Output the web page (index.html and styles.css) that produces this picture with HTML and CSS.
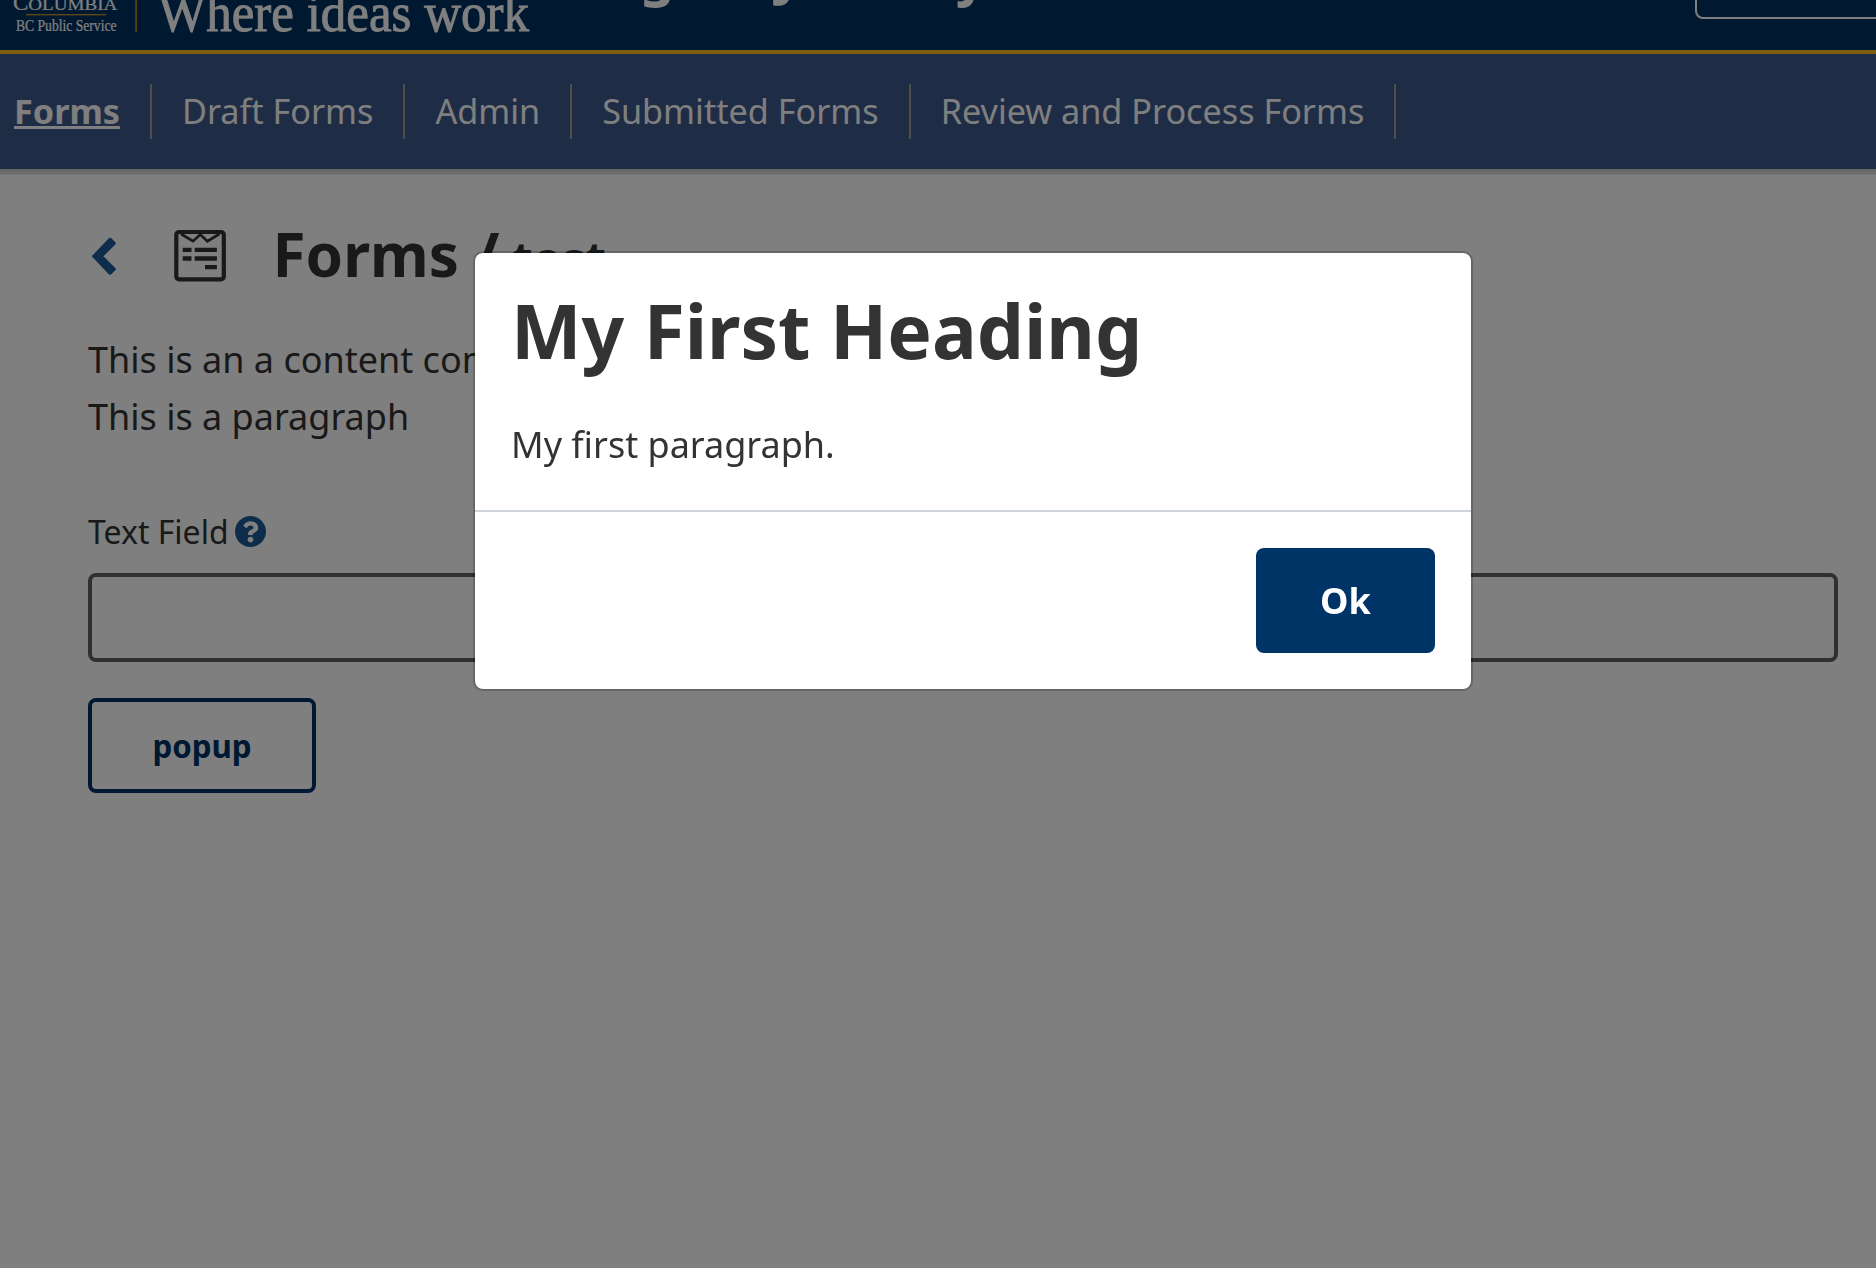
FILE: index.html
```html
<!DOCTYPE html>
<html lang="en">
<head>
<meta charset="utf-8">
<title>Digital Journeys</title>
<link rel="stylesheet" href="styles.css">
</head>
<body>
<header class="site-header">
  <svg class="logo" width="560" height="50" viewBox="0 0 560 50" role="img">
    <text class="logo-text" y="9.5" x="13"><tspan font-size="23">C</tspan><tspan font-size="17.5" textLength="89" lengthAdjust="spacingAndGlyphs">OLUMBIA</tspan></text>
    <rect class="logo-rule" x="26" y="14" width="80" height="1.4"/>
    <text class="logo-text" x="16" y="30.5" font-size="15.8" textLength="100.5" lengthAdjust="spacingAndGlyphs">BC Public Service</text>
    <rect class="logo-rule" x="135.3" y="0" width="1.6" height="32"/>
    <text class="logo-text tagline" x="158" y="31" font-size="54" textLength="371" lengthAdjust="spacingAndGlyphs">Where ideas work</text>
  </svg>
  <div class="site-title">Digital Journeys</div>
  <button class="logout"></button>
</header>
<nav class="nav">
  <a class="nav-item active"><span>Forms</span></a>
  <a class="nav-item"><span>Draft Forms</span></a>
  <a class="nav-item"><span>Admin</span></a>
  <a class="nav-item"><span>Submitted Forms</span></a>
  <a class="nav-item"><span>Review and Process Forms</span></a>
</nav>
<div class="nav-shadow"></div>
<main class="content">
  <div class="page-head">
    <svg class="chevron" width="26" height="42" viewBox="0 0 26 42"><path d="M3.7 21.3 20.8 3.3Q22 2 23.3 3.3L27.3 7.2Q28.4 8.4 27.3 9.5L15.4 21.3 27.3 33Q28.4 34.2 27.3 35.3L23.3 39.2Q22 40.4 20.8 39.2Z"/></svg>
    <svg class="form-icon" width="52" height="52" viewBox="0 0 52 52">
      <rect x="2.3" y="2" width="47.5" height="47.4" rx="2.8" fill="none" stroke-width="4.2"/>
      <path d="M7 4 19 11.2 26.3 4.6 33.4 11.2 45.4 4" fill="none" stroke-width="2.7"/>
      <path d="M8.7 19.8h8.8M20.7 19.8h22.2M8.7 28.5h8.8M20.7 28.5h22.2M31 37.2h11.9" stroke-width="4.3"/>
    </svg>
    <h1 class="page-title">Forms /<span class="form-name"> test</span></h1>
  </div>
  <div class="copy">
    <p>This is an a content component</p>
    <p>This is a paragraph</p>
  </div>
  <label class="label" for="text-field">Text Field
    <svg class="help" width="31" height="31" viewBox="8 8 496 496"><path d="M504 256c0 136.997-111.043 248-248 248S8 392.997 8 256C8 119.083 119.043 8 256 8s248 111.083 248 248zM262.655 90c-54.497 0-89.255 22.957-116.549 63.758-3.536 5.286-2.353 12.415 2.715 16.258l34.699 26.31c5.205 3.947 12.621 3.008 16.665-2.122 17.864-22.658 30.113-35.797 57.303-35.797 20.429 0 45.698 13.148 45.698 32.958 0 14.976-12.363 22.667-32.534 33.976C247.128 238.528 216 254.941 216 296v4c0 6.627 5.373 12 12 12h56c6.627 0 12-5.373 12-12v-1.333c0-28.462 83.186-29.647 83.186-106.667 0-58.002-60.165-102-116.531-102zM256 338c-25.365 0-46 20.635-46 46 0 25.364 20.635 46 46 46s46-20.636 46-46c0-25.365-20.635-46-46-46z"/></svg>
  </label>
  <input class="field" id="text-field" type="text">
  <button class="btn-outline">popup</button>
</main>
<div class="backdrop">
  <div class="modal" role="dialog">
    <div class="modal-body">
      <h1>My First Heading</h1>
      <p>My first paragraph.</p>
    </div>
    <div class="modal-footer"><button class="btn-primary">Ok</button></div>
  </div>
</div>
</body>
</html>
```
FILE: styles.css
```css
* { box-sizing: border-box; }
body {
  margin: 0;
  height: 1268px;
  overflow: hidden;
  background: #fff;
  color: #333;
  font-family: "Noto Sans", sans-serif;
}
h1, p { margin: 0; }
button { font-family: inherit; }

.site-header {
  display: flex;
  align-items: flex-end;
  height: 54px;
  overflow: hidden;
  background: #003362;
  border-bottom: 4px solid #ffbd20;
}
.logo { flex: none; }
.logo-text { font-family: "Liberation Serif", serif; fill: #fff; stroke: #fff; stroke-width: .2; }
.tagline { stroke-width: .9; }
.logo-rule { fill: #c08c28; }
.site-title {
  margin-left: 24px;
  margin-bottom: 40px;
  color: #fff;
  font-size: 54.4px;
  font-weight: 700;
  line-height: 72px;
  white-space: nowrap;
}
.logout {
  flex: none;
  width: 220px;
  height: 80px;
  margin: 0 -39px 31px auto;
  background: transparent;
  border: 2px solid #fff;
  border-radius: 8px;
}

.nav {
  display: flex;
  align-items: center;
  height: 115px;
  padding-left: 14px;
  background: #3c588b;
}
.nav-item {
  height: 55px;
  padding-right: 30px;
  margin-right: 30px;
  border-right: 2px solid #a09c98;
  color: #fff;
  font-size: 34.2px;
  line-height: 54px;
  white-space: nowrap;
}
.active { font-weight: 700; text-decoration: underline; }
.nav-shadow { height: 6px; background: linear-gradient(#c8c8c8, #e4e4e4); }

.content { padding: 42px 38px 0 88px; }
.page-head { display: flex; align-items: center; height: 78px; }
.chevron { flex: none; overflow: visible; fill: #1a5a96; }
.form-icon { flex: none; margin-left: 60px; stroke: #333; }
.page-title {
  margin-left: 46.5px;
  font-size: 60.2px;
  line-height: 78px;
  white-space: nowrap;
}
.form-name { font-size: 47.8px; white-space: pre; }

.copy { margin-top: 36px; font-size: 36px; line-height: 57px; }
.label {
  display: flex;
  align-items: center;
  gap: 6px;
  margin-top: 62px;
  height: 49px;
  font-size: 32px;
}
.help { fill: #1a5a96; }
.field {
  display: block;
  width: 100%;
  height: 89px;
  margin-top: 17px;
  background: transparent;
  border: 4px solid #606060;
  border-radius: 8px;
}
.btn-outline {
  display: block;
  width: 228px;
  height: 95px;
  margin-top: 36px;
  background: transparent;
  border: 4px solid #036;
  border-radius: 8px;
  color: #036;
  font-size: 31.3px;
  font-weight: 700;
}

.backdrop {
  position: fixed;
  inset: 0;
  padding: 251px 0 0 473px;
  background: rgba(0, 0, 0, .5);
}
.modal {
  width: 1000px;
  height: 440px;
  background: #fff;
  background-clip: padding-box;
  border: 2px solid rgba(0, 0, 0, .2);
  border-radius: 10px;
}
.modal-body { height: 257px; padding: 31px 36px; }
.modal-body h1 { font-size: 74.8px; line-height: 92px; }
.modal-body p { margin-top: 42px; font-size: 36px; line-height: 54px; }
.modal-footer {
  display: flex;
  justify-content: flex-end;
  padding: 36px;
  border-top: 2px solid #cfd4da;
}
.btn-primary {
  width: 179px;
  height: 105px;
  background: #036;
  border: 0;
  border-radius: 8px;
  color: #fff;
  font-size: 36px;
  font-weight: 700;
}
```
